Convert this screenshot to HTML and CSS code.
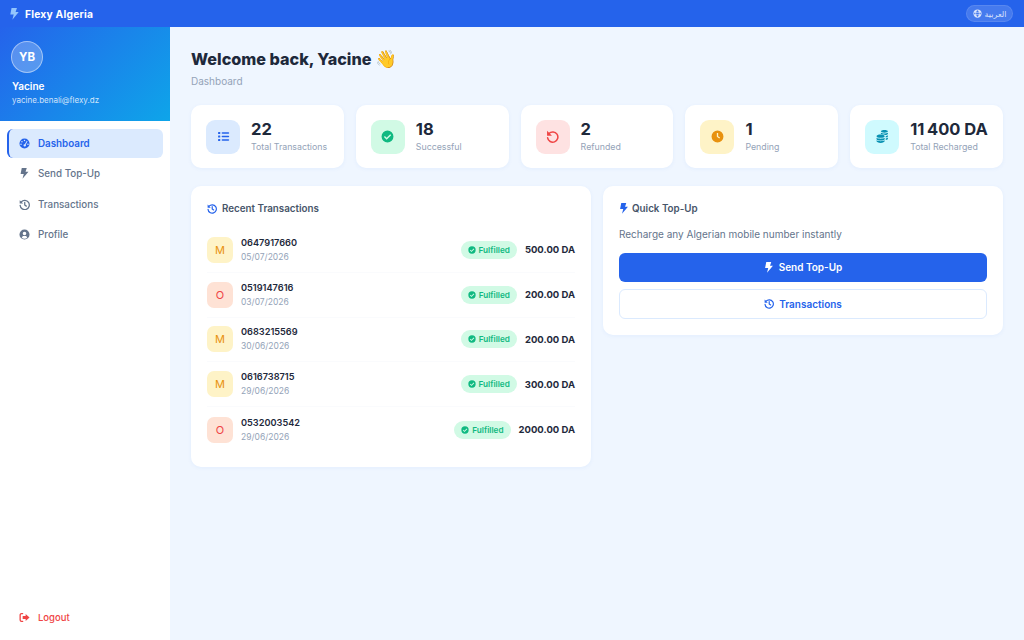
FILE: index.html
```html
<!DOCTYPE html>
<html lang="en">
<head>
    <meta charset="UTF-8">
    <title>Flexy Algeria</title>
    <link rel="stylesheet" href="styles.css">
</head>
<body>
    <svg class="icon-defs" xmlns="http://www.w3.org/2000/svg">
        <symbol id="i-bolt" viewBox="4 1 17.500 23"><path fill="currentColor" d="M7 1h10.500l-2.600 7.600H21L8.600 23.500l2.600-10H4.600z"/></symbol>
        <symbol id="i-gauge" viewBox="0 0 24 24"><path fill="currentColor" fill-rule="evenodd" d="M12 1a11 11 0 1 1 0 22 11 11 0 0 1 0-22zM12 4a1.600 1.600 0 1 0 0 3.200A1.600 1.600 0 0 0 12 4zM6.500 6.500a1.600 1.600 0 1 0 0 3.200 1.600 1.600 0 0 0 0-3.200zM4.400 12a1.600 1.600 0 1 0 0 3.200 1.600 1.600 0 0 0 0-3.200zM19.600 12a1.600 1.600 0 1 0 0 3.200 1.600 1.600 0 0 0 0-3.200zM17 6.200l-4.300 7.200a2.600 2.600 0 1 0 1.900 1.100L18.600 7.200z"/></symbol>
        <symbol id="i-history" viewBox="0 0 24 24"><g fill="none" stroke="currentColor" stroke-width="2.800" stroke-linecap="round" stroke-linejoin="round"><path d="M5 6.500A10 10 0 1 1 2.500 14"/><path d="M12.500 7.500v5.500l3.500 2.500"/></g><path fill="currentColor" d="M1.500 2.500v7.500H9z"/></symbol>
        <symbol id="i-user" viewBox="0 0 24 24"><path fill="currentColor" fill-rule="evenodd" d="M12 1a11 11 0 1 1 0 22 11 11 0 0 1 0-22zM12 6a3.900 3.900 0 1 0 0 7.800A3.900 3.900 0 0 0 12 6zM6 18.800a8.200 8.200 0 0 0 12 0c-.6-2-2.300-3.300-4-3.300h-4c-1.700 0-3.400 1.300-4 3.300z"/></symbol>
        <symbol id="i-logout" viewBox="0 0 24 24"><g fill="none" stroke="currentColor" stroke-width="2.800" stroke-linecap="round"><path d="M8 3.500H5.500A3 3 0 0 0 2.500 6.500v11a3 3 0 0 0 3 3H8"/></g><path fill="currentColor" d="M14.500 4.500L23 12l-8.500 7.500V15.500H8v-7h6.500z"/></symbol>
        <symbol id="i-list" viewBox="0 0 24 24"><g fill="currentColor"><rect x="2" y="3.500" width="4" height="4" rx="1"/><rect x="2" y="10" width="4" height="4" rx="1"/><rect x="2" y="16.500" width="4" height="4" rx="1"/><rect x="8.500" y="4" width="14" height="3" rx="1.500"/><rect x="8.500" y="10.500" width="14" height="3" rx="1.500"/><rect x="8.500" y="17" width="14" height="3" rx="1.500"/></g></symbol>
        <symbol id="i-check" viewBox="0 0 24 24"><path fill="currentColor" fill-rule="evenodd" d="M12 1a11 11 0 1 1 0 22 11 11 0 0 1 0-22zM17 7.800l-6.600 6.600-3.200-3.200-1.800 1.800 5 5 8.400-8.400z"/></symbol>
        <symbol id="i-undo" viewBox="0 0 24 24"><path fill="none" stroke="currentColor" stroke-width="2.800" stroke-linecap="round" d="M5.500 6.500A9.500 9.500 0 1 1 3 14.500"/><path fill="currentColor" d="M2 1.500v9h9z"/></symbol>
        <symbol id="i-clock" viewBox="0 0 24 24"><path fill="currentColor" fill-rule="evenodd" d="M12 1a11 11 0 1 1 0 22 11 11 0 0 1 0-22zM10.800 5.500v7.100l4.600 3.100 1.300-1.900-3.500-2.400V5.500z"/></symbol>
        <symbol id="i-coins" viewBox="0 0 24 24"><g fill="currentColor"><path d="M9 2.500c0-1.400 3-2.500 6.500-2.500S22 1.100 22 2.500 19 5 15.500 5 9 3.900 9 2.500z"/><path d="M9 5c1.400 1 4 1.500 6.500 1.500S20.600 6 22 5v2c0 1.200-2 2.200-5 2.400-.8-.9-4.500-2-8-2.200z"/><path d="M18 11c2-.2 3.200-.8 4-1.500v2c0 1-1.400 2-4 2.300zM18 15.500c2-.2 3.200-.8 4-1.500v2c0 1-1.400 2-4 2.300z"/><path d="M1 11.500C1 9.600 4.400 8.500 8.500 8.500s7.500 1.100 7.500 3-3.400 3-7.500 3-7.500-1.100-7.500-3z"/><path d="M1 14.500c1.600 1.100 4.600 1.600 7.500 1.600s5.900-.5 7.500-1.600v2c0 1.800-3.400 3-7.500 3s-7.500-1.200-7.500-3z"/><path d="M1 19c1.600 1.100 4.600 1.600 7.500 1.600s5.900-.5 7.500-1.600v1.500c0 1.900-3.400 3.500-7.500 3.500S1 22.400 1 20.500z"/></g></symbol>
        <symbol id="i-globe" viewBox="0 0 24 24"><path fill="currentColor" fill-rule="evenodd" d="M12 1a11 11 0 1 1 0 22 11 11 0 0 1 0-22zM12 3C10.300 3.800 9 6.500 8.700 8.500h6.600C15 6.500 13.700 3.800 12 3zM8.400 10.300a16 16 0 0 0 0 3.400h7.200a16 16 0 0 0 0-3.400zM8.700 15.500C9 17.500 10.300 20.200 12 21c1.700-.8 3-3.500 3.300-5.500zM3.400 10.300a9 9 0 0 0 0 3.400h3.300a19 19 0 0 1 0-3.400zM17.300 10.300a19 19 0 0 1 0 3.400h3.300a9 9 0 0 0 0-3.400z"/></symbol>
    </svg>

    <header class="topbar">
        <div class="brand">
            <svg class="brand-icon"><use href="#i-bolt"/></svg>
            <span>Flexy Algeria</span>
        </div>
        <button class="lang-button" type="button">
            <svg class="lang-icon"><use href="#i-globe"/></svg>
            <span lang="ar">العربية</span>
        </button>
    </header>

    <div class="layout">
        <aside class="sidebar">
            <div class="profile">
                <div class="avatar">YB</div>
                <div class="profile-name">Yacine</div>
                <div class="profile-email">yacine.benali@flexy.dz</div>
            </div>
            <nav class="nav">
                <a class="nav-item active"><svg class="nav-icon"><use href="#i-gauge"/></svg>Dashboard</a>
                <a class="nav-item"><svg class="nav-icon"><use href="#i-bolt"/></svg>Send Top-Up</a>
                <a class="nav-item"><svg class="nav-icon"><use href="#i-history"/></svg>Transactions</a>
                <a class="nav-item"><svg class="nav-icon"><use href="#i-user"/></svg>Profile</a>
            </nav>
            <a class="logout"><svg class="nav-icon"><use href="#i-logout"/></svg>Logout</a>
        </aside>

        <main class="main">
            <h1 class="page-title">Welcome back, Yacine <span class="wave">👋</span></h1>
            <div class="page-sub">Dashboard</div>

            <section class="stats">
                <div class="stat-card">
                    <div class="stat-icon blue"><svg><use href="#i-list"/></svg></div>
                    <div><div class="stat-value">22</div><div class="stat-label">Total Transactions</div></div>
                </div>
                <div class="stat-card">
                    <div class="stat-icon green"><svg><use href="#i-check"/></svg></div>
                    <div><div class="stat-value">18</div><div class="stat-label">Successful</div></div>
                </div>
                <div class="stat-card">
                    <div class="stat-icon red"><svg><use href="#i-undo"/></svg></div>
                    <div><div class="stat-value">2</div><div class="stat-label">Refunded</div></div>
                </div>
                <div class="stat-card">
                    <div class="stat-icon amber"><svg><use href="#i-clock"/></svg></div>
                    <div><div class="stat-value">1</div><div class="stat-label">Pending</div></div>
                </div>
                <div class="stat-card">
                    <div class="stat-icon cyan"><svg><use href="#i-coins"/></svg></div>
                    <div><div class="stat-value">11&#8239;400 DA</div><div class="stat-label">Total Recharged</div></div>
                </div>
            </section>

            <section class="panels">
                <div class="panel recent">
                    <div class="panel-title"><svg class="panel-icon"><use href="#i-history"/></svg>Recent Transactions</div>
                    <div class="tx-row">
                        <div class="tx-op mobilis">M</div>
                        <div class="tx-info"><div class="tx-phone">0647917660</div><div class="tx-date">05/07/2026</div></div>
                        <span class="pill"><svg class="pill-icon"><use href="#i-check"/></svg>Fulfilled</span>
                        <div class="tx-amount">500.00 DA</div>
                    </div>
                    <div class="tx-row">
                        <div class="tx-op ooredoo">O</div>
                        <div class="tx-info"><div class="tx-phone">0519147616</div><div class="tx-date">03/07/2026</div></div>
                        <span class="pill"><svg class="pill-icon"><use href="#i-check"/></svg>Fulfilled</span>
                        <div class="tx-amount">200.00 DA</div>
                    </div>
                    <div class="tx-row">
                        <div class="tx-op mobilis">M</div>
                        <div class="tx-info"><div class="tx-phone">0683215569</div><div class="tx-date">30/06/2026</div></div>
                        <span class="pill"><svg class="pill-icon"><use href="#i-check"/></svg>Fulfilled</span>
                        <div class="tx-amount">200.00 DA</div>
                    </div>
                    <div class="tx-row">
                        <div class="tx-op mobilis">M</div>
                        <div class="tx-info"><div class="tx-phone">0616738715</div><div class="tx-date">29/06/2026</div></div>
                        <span class="pill"><svg class="pill-icon"><use href="#i-check"/></svg>Fulfilled</span>
                        <div class="tx-amount">300.00 DA</div>
                    </div>
                    <div class="tx-row last">
                        <div class="tx-op ooredoo">O</div>
                        <div class="tx-info"><div class="tx-phone">0532003542</div><div class="tx-date">29/06/2026</div></div>
                        <span class="pill"><svg class="pill-icon"><use href="#i-check"/></svg>Fulfilled</span>
                        <div class="tx-amount">2000.00 DA</div>
                    </div>
                </div>

                <div class="panel quick">
                    <div class="panel-title"><svg class="panel-icon"><use href="#i-bolt"/></svg>Quick Top-Up</div>
                    <p class="quick-text">Recharge any Algerian mobile number instantly</p>
                    <a class="btn btn-primary"><svg class="btn-icon"><use href="#i-bolt"/></svg>Send Top-Up</a>
                    <a class="btn btn-outline"><svg class="btn-icon"><use href="#i-history"/></svg>Transactions</a>
                </div>
            </section>
        </main>
    </div>
</body>
</html>
```

FILE: styles.css
```css
* {
    box-sizing: border-box;
}

body {
    margin: 0;
    height: 640px;
    overflow: hidden;
    font-family: Inter, "Noto Sans", sans-serif;
    background-color: #eff6ff;
    color: #1e293b;
}

.icon-defs {
    display: none;
}

.topbar {
    height: 27px;
    background-color: #2563eb;
    display: flex;
    align-items: center;
    justify-content: space-between;
    padding: 0 11px 0 10px;
}

.brand {
    display: flex;
    align-items: center;
    gap: 6px;
    color: #fff;
    font-size: 10.3px;
    font-weight: 700;
    letter-spacing: 0.2px;
}

.brand-icon {
    width: 9px;
    height: 12px;
    color: #93c5fd;
}

.lang-button {
    width: 47px;
    height: 17px;
    border: 1px solid rgba(255, 255, 255, 0.1);
    border-radius: 9px;
    background-color: rgba(255, 255, 255, 0.15);
    color: rgba(255, 255, 255, 0.8);
    display: flex;
    align-items: center;
    justify-content: center;
    gap: 3px;
    padding: 0;
    font-family: "Noto Sans", "DejaVu Sans", sans-serif;
    font-size: 8px;
}

.lang-icon {
    width: 9px;
    height: 9px;
}

.layout {
    display: flex;
    height: 613px;
}

.sidebar {
    width: 170px;
    background-color: #fff;
    display: flex;
    flex-direction: column;
    flex-shrink: 0;
}

.profile {
    height: 94px;
    padding: 14px 11px 0;
    background: linear-gradient(135deg, #2563eb, #0ea5e9);
    color: #fff;
}

.avatar {
    width: 32px;
    height: 32px;
    border-radius: 50%;
    border: 1.5px solid rgba(255, 255, 255, 0.45);
    background-color: rgba(255, 255, 255, 0.25);
    display: flex;
    align-items: center;
    justify-content: center;
    font-size: 11.5px;
    font-weight: 700;
    margin-bottom: 7px;
}

.profile-name {
    padding-left: 1px;
    font-size: 10px;
    font-weight: 600;
    line-height: 13px;
}

.profile-email {
    padding-left: 1px;
    font-size: 8px;
    line-height: 14px;
    color: rgba(255, 255, 255, 0.8);
}

.nav {
    padding: 8px 7px;
    display: flex;
    flex-direction: column;
    gap: 2px;
}

.nav-item {
    height: 28.5px;
    display: flex;
    align-items: center;
    gap: 8px;
    padding-left: 12px;
    border-radius: 6px;
    font-size: 9.8px;
    font-weight: 500;
    color: #64748b;
}

.nav-item.active {
    background-color: #dbeafe;
    color: #2563eb;
    font-weight: 600;
    border-left: 2px solid #2563eb;
    padding-left: 10px;
}

.nav-icon {
    width: 11px;
    height: 11px;
    flex-shrink: 0;
}

.logout {
    margin-top: auto;
    margin-bottom: 17px;
    padding-left: 19px;
    display: flex;
    align-items: center;
    gap: 8px;
    font-size: 9.5px;
    font-weight: 500;
    color: #ef4444;
}

.main {
    flex-grow: 1;
    padding: 21px;
}

.page-title {
    margin: 0;
    font-size: 16.2px;
    line-height: 22px;
    font-weight: 800;
}

.wave {
    font-size: 17.500px;
    line-height: 20px;
}

.page-sub {
    margin-top: 4px;
    font-size: 10px;
    line-height: 14px;
    color: #94a3b8;
}

.stats {
    margin-top: 17px;
    display: grid;
    grid-template-columns: repeat(5, minmax(0, 1fr));
    gap: 12px;
}

.stat-card {
    height: 63px;
    background-color: #fff;
    border-radius: 10px;
    box-shadow: 0 1px 4px rgba(37, 99, 235, 0.06);
    padding: 0 15px;
    display: flex;
    align-items: center;
    gap: 11px;
}

.stat-icon {
    width: 34px;
    height: 34px;
    border-radius: 9px;
    display: flex;
    align-items: center;
    justify-content: center;
    flex-shrink: 0;
}

.stat-icon svg {
    width: 13px;
    height: 13px;
}

.stat-icon.blue { background-color: #dbeafe; color: #2563eb; }
.stat-icon.green { background-color: #d1fae5; color: #10b981; }
.stat-icon.red { background-color: #fee2e2; color: #ef4444; }
.stat-icon.amber { background-color: #fef3c7; color: #e8920f; }
.stat-icon.cyan { background-color: #cffafe; color: #0891b2; }

.stat-value {
    font-size: 16.5px;
    line-height: 21px;
    font-weight: 700;
    white-space: nowrap;
    margin-top: -1px;
}

.stat-label {
    font-size: 8.8px;
    line-height: 13px;
    color: #94a3b8;
    white-space: nowrap;
}

.panels {
    margin-top: 18px;
    display: grid;
    grid-template-columns: 1fr 1fr;
    gap: 12px;
    align-items: start;
}

.panel {
    background-color: #fff;
    border-radius: 10px;
    box-shadow: 0 1px 4px rgba(37, 99, 235, 0.06);
    padding: 16px;
}

.recent {
    height: 281px;
}

.quick {
    height: 149px;
}

.panel-title {
    display: flex;
    align-items: center;
    gap: 5px;
    height: 13px;
    font-size: 9.8px;
    font-weight: 600;
    color: #475569;
}

.panel-icon {
    width: 10px;
    height: 11px;
    color: #2563eb;
}

.quick .panel-title {
    gap: 3px;
}

.recent .panel-title {
    margin-bottom: 13px;
}

.tx-row {
    height: 44.8px;
    display: flex;
    align-items: center;
    gap: 8px;
    border-bottom: 1px solid #fafbfd;
}

.tx-row.last {
    border-bottom: none;
}

.tx-op {
    width: 26px;
    height: 26px;
    border-radius: 7px;
    display: flex;
    align-items: center;
    justify-content: center;
    font-size: 11px;
    font-weight: 400;
    flex-shrink: 0;
}

.tx-op.mobilis { background-color: #fef3c7; color: #e8920f; }
.tx-op.ooredoo { background-color: #fee2d5; color: #ef4444; }

.tx-info {
    flex-grow: 1;
}

.tx-phone {
    font-size: 9.2px;
    line-height: 14px;
    font-weight: 600;
}

.tx-date {
    font-size: 8.5px;
    line-height: 14px;
    color: #94a3b8;
}

.pill {
    height: 18px;
    padding: 0 7px;
    border-radius: 9px;
    background-color: #d1fae5;
    color: #10b981;
    display: flex;
    align-items: center;
    gap: 3px;
    font-size: 8.2px;
    font-weight: 600;
}

.pill-icon {
    width: 8px;
    height: 8px;
}

.tx-amount {
    font-size: 9.5px;
    font-weight: 700;
    white-space: nowrap;
}

.quick-text {
    margin: 12px 0 12px;
    font-size: 10px;
    line-height: 14px;
    color: #64748b;
}

.btn {
    display: flex;
    align-items: center;
    justify-content: center;
    gap: 5px;
    border-radius: 6px;
    padding-bottom: 1px;
    font-size: 10px;
    font-weight: 600;
}

.btn-primary {
    height: 29px;
    background-color: #2563eb;
    color: #fff;
    margin-bottom: 7px;
}

.btn-outline {
    height: 30px;
    border: 1px solid #dbeafe;
    background-color: #fff;
    color: #2563eb;
}

.btn-icon {
    width: 10px;
    height: 11px;
}
```
